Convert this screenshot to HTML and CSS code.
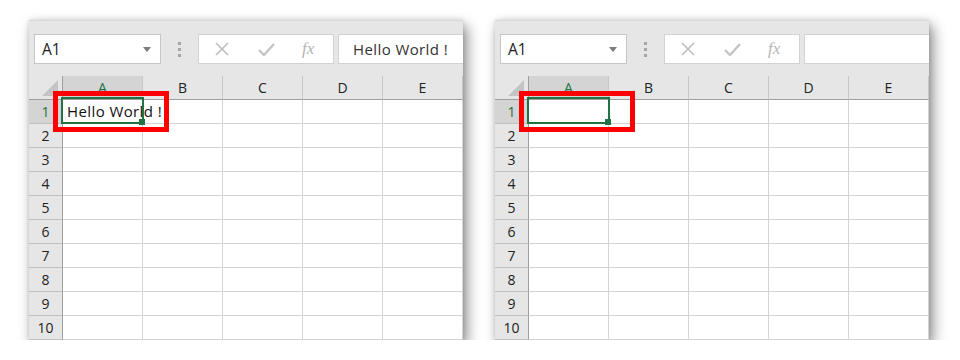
FILE: index.html
```html
<!DOCTYPE html>
<html lang="en">
<head>
    <meta charset="UTF-8">
    <title>Hello World in Excel</title>
    <link rel="stylesheet" href="styles.css">
</head>
<body>
    <div class="page">
      <div class="sheet" data-a1="Hello World !">
        <div class="formula-bar">
          <div class="name-box">
            <span>A1</span>
            <svg class="caret" width="8" height="5" viewBox="0 0 8 5"><path d="M0 0h8L4 5z" fill="#7a7a7a"/></svg>
          </div>
          <div class="grip"><i></i><i></i><i></i></div>
          <div class="fx-buttons">
            <svg class="icon-x" width="14" height="14" viewBox="0 0 14 14"><path d="M1 1l12 12M13 1L1 13" stroke="#bdbdbd" stroke-width="1.6" fill="none"/></svg>
            <svg class="icon-check" width="17" height="13" viewBox="0 0 17 13"><path d="M1 7l5 5L16 1" stroke="#c4c4c4" stroke-width="2.4" fill="none"/></svg>
            <span class="fx">fx</span>
          </div>
          <div class="formula-input">Hello World !</div>
        </div>
        <div class="grid"></div>
        <div class="selection"><span class="handle"></span></div>
        <div class="highlight"></div>
      </div>

      <div class="sheet" data-a1="">
        <div class="formula-bar">
          <div class="name-box">
            <span>A1</span>
            <svg class="caret" width="8" height="5" viewBox="0 0 8 5"><path d="M0 0h8L4 5z" fill="#7a7a7a"/></svg>
          </div>
          <div class="grip"><i></i><i></i><i></i></div>
          <div class="fx-buttons">
            <svg class="icon-x" width="14" height="14" viewBox="0 0 14 14"><path d="M1 1l12 12M13 1L1 13" stroke="#bdbdbd" stroke-width="1.6" fill="none"/></svg>
            <svg class="icon-check" width="17" height="13" viewBox="0 0 17 13"><path d="M1 7l5 5L16 1" stroke="#c4c4c4" stroke-width="2.4" fill="none"/></svg>
            <span class="fx">fx</span>
          </div>
          <div class="formula-input"></div>
        </div>
        <div class="grid"></div>
        <div class="selection"><span class="handle"></span></div>
        <div class="highlight"></div>
      </div>
    </div>

    <script>
      // build the header row and rows 1~10 for each sheet
      const cols = ['A', 'B', 'C', 'D', 'E'];
      document.querySelectorAll('.sheet').forEach(sheet => {
        const grid = sheet.querySelector('.grid');
        let html = '<div class="corner"><span class="corner-mark"></span></div>';
        cols.forEach(c => {
          html += `<div class="col-head${c === 'A' ? ' active' : ''}">${c}</div>`;
        });
        for (let r = 1; r <= 10; r++) {
          html += `<div class="row-head${r === 1 ? ' active' : ''}">${r}</div>`;
          cols.forEach(c => {
            const text = (r === 1 && c === 'A') ? sheet.dataset.a1 : '';
            html += `<div class="cell">${text}</div>`;
          });
        }
        grid.innerHTML = html;
      });
    </script>
</body>
</html>
```

FILE: styles.css
```css
body {
    margin: 0;
    background-color: #fff;
    font-family: "Open Sans", "Noto Sans", sans-serif;
}
.page {
    display: flex;
    gap: 32px;
    padding: 20px 0 0 29px;
}
.sheet {
    position: relative;
    width: 434px;
    height: 320px;
    background-color: #e6e6e6;
    box-shadow: 4px 6px 13px rgba(0, 0, 0, 0.45), 0 0 5px rgba(0, 0, 0, 0.12);
}

/* formula bar */
.formula-bar {
    height: 56px;
    box-sizing: border-box;
    display: flex;
    align-items: flex-start;
    padding: 13px 0 0 5px;
    border-top: 1px solid #dadada;
    overflow: hidden;
}
.name-box {
    flex: none;
    width: 127px;
    height: 30px;
    box-sizing: border-box;
    display: flex;
    align-items: center;
    justify-content: space-between;
    padding: 0 9px 0 7px;
    background-color: #fff;
    border: 1px solid #c6c6c6;
    font-size: 15.5px;
    color: #222;
}
.grip {
    flex: none;
    display: flex;
    flex-direction: column;
    gap: 3px;
    margin: 8px 17px 0 17px;
}
.grip i {
    width: 3px;
    height: 3px;
    background-color: #a6a6a6;
}
.fx-buttons {
    flex: none;
    width: 136px;
    height: 30px;
    box-sizing: border-box;
    display: flex;
    align-items: center;
    background-color: #fff;
    border: 1px solid #d2d2d2;
}
.icon-x {
    margin-left: 16px;
}
.icon-check {
    margin-left: 29px;
}
.fx {
    margin-left: 27px;
    font-family: "Liberation Serif", serif;
    font-style: italic;
    font-size: 17px;
    color: #b4b4b4;
}
.formula-input {
    flex: none;
    width: 200px;
    height: 30px;
    box-sizing: border-box;
    margin-left: 4px;
    padding-left: 14px;
    background-color: #fff;
    border: 1px solid #d2d2d2;
    font-size: 15px;
    letter-spacing: 0.4px;
    line-height: 28px;
    color: #333;
    white-space: nowrap;
}

/* grid */
.grid {
    display: grid;
    grid-template-columns: 34px repeat(5, 80px);
    grid-auto-rows: 24px;
    background-color: #fff;
}
.grid > div {
    box-sizing: border-box;
    font-size: 14px;
    line-height: 23px;
    color: #222;
}
.corner, .col-head {
    position: relative;
    background-color: #e6e6e6;
    border-right: 1px solid #c8c8c8;
    border-bottom: 1px solid #9e9e9e;
    text-align: center;
}
.corner {
    border-right-color: #9e9e9e;
}
.corner-mark {
    position: absolute;
    right: 4px;
    bottom: 3px;
    width: 0;
    height: 0;
    border-left: 16px solid transparent;
    border-bottom: 16px solid #c4c4c4;
}
.row-head {
    background-color: #e6e6e6;
    border-right: 1px solid #9e9e9e;
    border-bottom: 1px solid #c0c0c0;
    text-align: center;
}
.col-head.active, .row-head.active {
    background-color: #d4d4d4;
    color: #217346;
}
.cell {
    border-right: 1px solid #d4d4d4;
    border-bottom: 1px solid #d4d4d4;
    padding-left: 4px;
    white-space: nowrap;
    font-size: 15px !important;
    letter-spacing: 0.4px;
    color: #111 !important;
}

/* selected cell A1 */
.selection {
    position: absolute;
    left: 32px;
    top: 77px;
    width: 83px;
    height: 27px;
    box-sizing: border-box;
    border: 2px solid #217346;
}
.handle {
    position: absolute;
    right: -3px;
    bottom: -3px;
    width: 6px;
    height: 6px;
    background-color: #217346;
}

/* red highlight box */
.highlight {
    position: absolute;
    left: 24px;
    top: 71px;
    width: 116px;
    height: 41px;
    box-sizing: border-box;
    border: 5px solid #ff0000;
}
```
